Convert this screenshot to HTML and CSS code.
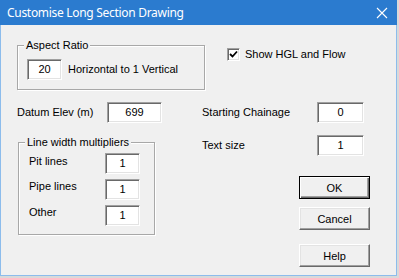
FILE: index.html
```html
<!DOCTYPE html>
<html>
<head>
<meta charset="utf-8">
<link rel="stylesheet" href="styles.css">
</head>
<body>
<div class="desktop">
  <div class="window">
    <div class="titlebar">
      <span class="title">Customise Long Section Drawing</span>
      <svg class="close" width="12" height="12" viewBox="0 0 12 12"><path d="M1 1 L11 11 M11 1 L1 11" stroke="#fff" stroke-width="1.1" fill="none"/></svg>
    </div>
    <div class="client">
      <div class="top-row">
        <div class="group aspect">
          <span class="legend">Aspect Ratio</span>
          <div class="row">
            <div class="field f-small center">20</div>
            <span class="label">Horizontal to 1 Vertical</span>
          </div>
        </div>
        <div class="check-row">
          <span class="checkbox"><svg width="9" height="9" viewBox="0 0 9 9"><path d="M1 4 L3.5 6.5 L8 1.5" stroke="#000" stroke-width="1.8" fill="none"/></svg></span>
          <span class="label">Show HGL and Flow</span>
        </div>
      </div>
      <div class="bottom-row">
        <div class="left-col">
          <div class="row datum">
            <span class="label datum-label">Datum Elev (m)</span>
            <div class="field f-datum center">699</div>
          </div>
          <div class="group lines">
            <span class="legend">Line width multipliers</span>
            <div class="row line-row"><span class="label line-label">Pit lines</span><div class="field f-small center">1</div></div>
            <div class="row line-row"><span class="label line-label">Pipe lines</span><div class="field f-small center">1</div></div>
            <div class="row line-row"><span class="label line-label">Other</span><div class="field f-small center">1</div></div>
          </div>
        </div>
        <div class="right-col">
          <div class="row"><span class="label right-label">Starting Chainage</span><div class="field f-right top">0</div></div>
          <div class="row gap-row"><span class="label right-label">Text size</span><div class="field f-right top">1</div></div>
          <div class="buttons">
            <div class="btn default">OK</div>
            <div class="btn cancel">Cancel</div>
            <div class="btn help">Help</div>
          </div>
        </div>
      </div>
    </div>
  </div>
</div>
</body>
</html>
```
FILE: styles.css
```css
html, body {
  margin: 0;
  padding: 0;
}
body {
  background: #d9d9d9;
  width: 399px;
  height: 278px;
  overflow: hidden;
  font-family: "Liberation Sans", Arial, sans-serif;
  font-size: 11px;
  color: #000;
}
.desktop {
  width: 399px;
  height: 278px;
}
.window {
  box-sizing: border-box;
  width: 397px;
  height: 276px;
  border: 1px solid #8cbcec;
  border-top: none;
  background: #f0f0f0;
  display: flex;
  flex-direction: column;
}
.titlebar {
  height: 25px;
  margin: 0 -1px;
  background: #2b7bcf;
  display: flex;
  align-items: center;
  justify-content: space-between;
  padding: 0 9px 0 7px;
  flex-shrink: 0;
}
.title {
  color: #fff;
  font-family: "Noto Sans", "Open Sans", sans-serif;
  font-size: 12px;
  letter-spacing: -0.3px;
  margin-top: -1px;
}
.close {
  display: block;
  margin-top: 1px;
}
.client {
  padding: 20px 0 0 16px;
}
.top-row {
  display: flex;
  align-items: flex-start;
}
.group {
  position: relative;
  box-sizing: border-box;
  border: 1px solid #a8a8a8;
  box-shadow: inset 1px 1px #fff, 1px 1px #fff;
}
.legend {
  position: absolute;
  top: -7px;
  left: 6px;
  padding: 0 2px;
  background: #f0f0f0;
  line-height: 13px;
}
.aspect {
  width: 188px;
  height: 45px;
  padding: 13px 0 0 9px;
}
.row {
  display: flex;
  align-items: center;
}
.label {
  white-space: nowrap;
  line-height: 13px;
}
.field {
  box-sizing: border-box;
  height: 21px;
  background: #fff;
  border: 1px solid;
  border-color: #a0a0a0 #fff #fff #a0a0a0;
  box-shadow: inset 1px 1px #696969, inset -1px -1px #e3e3e3;
  display: flex;
  justify-content: center;
  line-height: 13px;
}
.field.center {
  align-items: center;
}
.field.top {
  align-items: flex-start;
  padding-top: 3px;
}
.f-small {
  width: 35px;
}
.f-datum {
  width: 55px;
}
.f-right {
  width: 47px;
}
.aspect .label {
  margin-left: 6px;
}
.check-row {
  display: flex;
  align-items: center;
  margin: 3px 0 0 22px;
}
.checkbox {
  box-sizing: border-box;
  width: 13px;
  height: 13px;
  background: #fff;
  border: 1px solid;
  border-color: #a0a0a0 #fff #fff #a0a0a0;
  box-shadow: inset 1px 1px #696969, inset -1px -1px #e3e3e3;
  display: flex;
  align-items: center;
  justify-content: center;
  margin-right: 5px;
}
.checkbox svg {
  display: block;
}
.bottom-row {
  display: flex;
  margin-top: 12px;
}
.left-col {
  width: 185px;
}
.datum-label {
  width: 90px;
}
.lines {
  width: 137px;
  height: 93px;
  margin: 19px 0 0 1px;
  padding: 10px 0 0 10px;
}
.line-row {
  margin-bottom: 5px;
}
.line-label {
  width: 76px;
  margin-top: -6px;
}
.line-row:first-of-type .line-label {
  margin-top: -4px;
}
.right-label {
  width: 115px;
}
.gap-row {
  margin-top: 12px;
}
.buttons {
  display: flex;
  flex-direction: column;
  align-items: flex-start;
  margin: 20px 0 0 97px;
}
.btn {
  box-sizing: border-box;
  width: 71px;
  height: 23px;
  display: flex;
  align-items: center;
  justify-content: center;
  background: #f0f0f0;
  border: 1px solid;
  border-color: #fff #696969 #696969 #fff;
  box-shadow: inset -1px -1px #a0a0a0, inset 1px 1px #e3e3e3;
}
.btn.default {
  border: 1px solid #000;
  box-shadow: inset 1px 1px #fff, inset -1px -1px #696969, inset -2px -2px #a0a0a0;
}
.btn.cancel {
  margin-top: 8px;
}
.btn.help {
  margin-top: 14px;
}
```
